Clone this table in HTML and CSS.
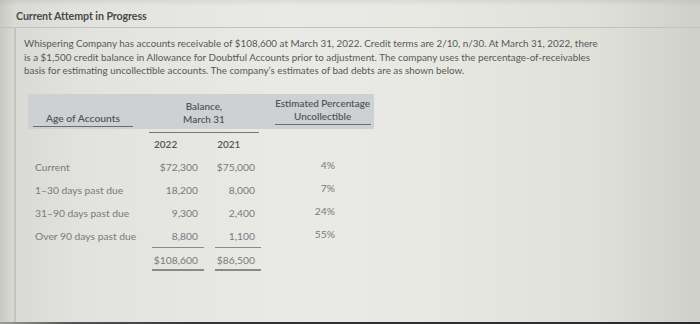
FILE: index.html
```html
<!DOCTYPE html>
<html>
<head>
<meta charset="utf-8">
<link rel="stylesheet" href="styles.css">
</head>
<body>
<div class="screen">
  <div class="topbar"><span class="title">Current Attempt in Progress</span></div>
  <div class="card">
    <p class="question">Whispering Company has accounts receivable of $108,600 at March 31, 2022. Credit terms are 2/10, n/30. At March 31, 2022, there<br>is a $1,500 credit balance in Allowance for Doubtful Accounts prior to adjustment. The company uses the percentage-of-receivables<br>basis for estimating uncollectible accounts. The company’s estimates of bad debts are as shown below.</p>
    <div class="table">
      <div class="row head">
        <div class="c1"><span class="ul age">Age of Accounts</span></div>
        <div class="c23 bal">Balance,<br>March 31</div>
        <div class="c4"><span class="ul est">Estimated Percentage<br>Uncollectible</span></div>
      </div>
      <div class="row years">
        <div class="c1"></div>
        <div class="yearbox">
          <span class="yr y1">2022</span>
          <span class="yr y2">2021</span>
        </div>
      </div>
      <div class="row data">
        <div class="c1 lbl">Current</div>
        <div class="c2"><span class="num">$72,300</span></div>
        <div class="c3"><span class="num">$75,000</span></div>
        <div class="c4 pct">4%</div>
      </div>
      <div class="row data">
        <div class="c1 lbl">1–30 days past due</div>
        <div class="c2"><span class="num">18,200</span></div>
        <div class="c3"><span class="num">8,000</span></div>
        <div class="c4 pct">7%</div>
      </div>
      <div class="row data">
        <div class="c1 lbl">31–90 days past due</div>
        <div class="c2"><span class="num">9,300</span></div>
        <div class="c3"><span class="num">2,400</span></div>
        <div class="c4 pct">24%</div>
      </div>
      <div class="row data">
        <div class="c1 lbl">Over 90 days past due</div>
        <div class="c2"><span class="num single">8,800</span></div>
        <div class="c3"><span class="num single">1,100</span></div>
        <div class="c4 pct">55%</div>
      </div>
      <div class="row data total">
        <div class="c1"></div>
        <div class="c2"><span class="num double">$108,600</span></div>
        <div class="c3"><span class="num double">$86,500</span></div>
        <div class="c4"></div>
      </div>
    </div>
  </div>
  <div class="taskbar"></div>
</div>
</body>
</html>
```
FILE: styles.css
```css
* { box-sizing: border-box; }
html, body { margin: 0; padding: 0; }
body {
  width: 700px;
  height: 324px;
  overflow: hidden;
  font-family: Lato, "Liberation Sans", sans-serif;
  color: #555;
}
.screen {
  width: 700px;
  height: 324px;
  display: flex;
  flex-direction: column;
  background:
    linear-gradient(180deg, rgba(0,0,0,0.06) 0, rgba(0,0,0,0) 6px),
    linear-gradient(90deg, #c9c9c4 0, #d9d9d5 2%, #e2e2de 12%, #e9e9e6 40%, #e8e8e3 62%, #dfe0d8 85%, #cfd0c7 100%);
}
.topbar {
  height: 28px;
  padding: 4px 0 0 16px;
  border-bottom: 1px solid #c2c2bd;
}
.title {
  font-weight: 700;
  font-size: 10.7px;
  color: #4a4a4a;
  letter-spacing: -0.1px;
}
.card {
  flex: 1;
  margin-left: 14px;
  border-left: 2px solid #c4c4bf;
  padding: 9px 0 0 8px;
}
.question {
  margin: 0;
  width: 620px;
  font-size: 9.85px;
  line-height: 13.5px;
  color: #585858;
  white-space: nowrap;
}
.table {
  margin: 16px 0 0 4px;
  width: 346px;
  display: flex;
  flex-direction: column;
}
.row { display: flex; }
.c1 { width: 121px; }
.c2 { width: 55px; }
.c3 { width: 57px; }
.c23 { width: 112px; }
.c4 { width: 113px; }
.head {
  height: 35px;
  background: #cdd1d4;
  align-items: flex-end;
  font-size: 9.9px;
  line-height: 13.4px;
  color: #555;
  font-weight: 600;
}
.head .c1 { padding: 0 0 2px 5px; }
.head .c4 { padding: 0 0 4px 13px; }
.ul {
  display: inline-block;
  border-bottom: 1px solid #6c6f72;
  text-align: center;
}
.age { width: 100px; font-size: 10.3px; }
.est { width: 96px; }
.bal {
  text-align: center;
  padding: 0 0 2px 0;
  margin-right: 2px;
}
.years { height: 26px; }
.yearbox {
  width: 110px;
  margin-top: 3px;
  border-top: 1px solid #777;
  display: flex;
  align-items: center;
  font-size: 10px;
  font-weight: 600;
  color: #555;
}
.yr { display: block; }
.y1 { margin-left: 5px; }
.y2 { margin-left: 40px; }
.data {
  height: 23px;
  align-items: center;
  font-size: 10.3px;
  color: #7a7a7a;
}
.years + .data { margin-top: 1px; }
.lbl { padding-left: 7px; }
.c2 .num { margin: 0 0 0 3px; }
.c3 .num { margin: 0 0 0 11px; }
.num {
  display: block;
  text-align: right;
  padding-right: 6px;
  line-height: 22px;
  height: 23px;
}
.single { border-bottom: 1px solid #8a8a8a; }
.double { border-bottom: 2px solid #8a8a8a; padding-top: 2px; line-height: 20px; }
.total { height: 24px; align-items: flex-start; }
.pct {
  text-align: right;
  padding-right: 39px;
  margin-top: -4px;
}
.taskbar {
  height: 2px;
  background: linear-gradient(90deg, #9a9a96 0, #555 10%, #333 30%, #2a2a2a 100%);
}
```
